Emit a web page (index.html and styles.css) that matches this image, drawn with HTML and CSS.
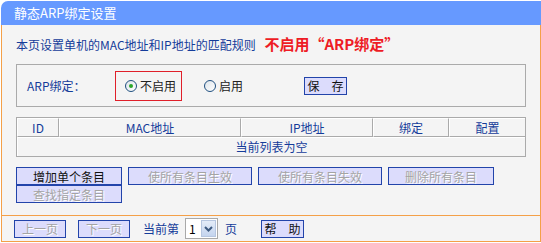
FILE: index.html
```html
<!DOCTYPE html>
<html lang="zh-CN">

<head>
  <meta charset="UTF-8">
  <title>静态ARP绑定设置</title>
  <link rel="stylesheet" href="styles.css">
</head>

<body>
  <div class="panel">
    <div class="title">静态ARP绑定设置</div>

    <div class="main">
      <div class="intro">
        本页设置单机的MAC地址和IP地址的匹配规则
        <span class="note">不启用“ARP绑定”</span>
      </div>

      <div class="bind-box">
        <span class="bind-label">ARP绑定：</span>
        <label class="opt opt-marked"><span class="radio checked"></span>不启用</label>
        <label class="opt opt-on"><span class="radio"></span>启用</label>
        <button class="btn btn-save" type="button">保　存</button>
      </div>

      <table class="list">
        <tr>
          <th class="c-id">ID</th>
          <th class="c-mac">MAC地址</th>
          <th class="c-ip">IP地址</th>
          <th class="c-bind">绑定</th>
          <th class="c-cfg">配置</th>
        </tr>
        <tr>
          <td colspan="5">当前列表为空</td>
        </tr>
      </table>

      <div class="actions">
        <button class="btn btn-short" type="button">增加单个条目</button>
        <button class="btn btn-long off" type="button">使所有条目生效</button>
        <button class="btn btn-long off" type="button">使所有条目失效</button>
        <button class="btn btn-short off" type="button">删除所有条目</button>
        <button class="btn btn-short off" type="button">查找指定条目</button>
      </div>
    </div>

    <div class="pager">
      <button class="btn btn-page off" type="button">上一页</button>
      <button class="btn btn-page off" type="button">下一页</button>
      <span class="page-text">当前第</span>
      <div class="select">
        <span class="select-value">1</span>
        <span class="select-arrow">
          <svg width="13" height="15" viewBox="0 0 13 15">
            <path d="M3 6 L6.5 9.5 L10 6" fill="none" stroke="#3d5a80" stroke-width="2"/>
          </svg>
        </span>
      </div>
      <span class="page-text page-unit">页</span>
      <button class="btn btn-help" type="button">帮　助</button>
    </div>
  </div>
</body>

</html>
```

FILE: styles.css
```css
body {
  margin: 0;
  background: #fff;
  font-family: "Noto Sans CJK SC", "Liberation Sans", sans-serif;
  font-size: 12px;
  color: #143c9a;
}

.panel {
  width: 541px;
  height: 243px;
}

.title {
  height: 24px;
  margin: 1px 0 0 1px;
  padding-left: 13px;
  line-height: 23px;
  font-size: 13px;
  color: #fff;
  background: #6699ff;
  border-top-left-radius: 7px;
}

.main {
  height: 190px;
  margin-left: 1px;
  width: 538px;
  background: #f4f4f4;
  border-left: 1px solid #f4a048;
  border-right: 1px solid #f4a048;
  border-bottom: 1px solid #f4a048;
}

.intro {
  padding: 11px 0 0 14px;
  height: 16px;
  line-height: 16px;
  white-space: nowrap;
}

.note {
  margin-left: 6px;
  font-size: 15px;
  font-weight: bold;
  color: #ee1c25;
}

.bind-box {
  display: flex;
  align-items: center;
  margin: 12px 0 0 14px;
  width: 508px;
  height: 41px;
  border: 1px solid #aaa;
}

.bind-label {
  width: 98px;
  padding-left: 10px;
  box-sizing: border-box;
  flex: none;
}

.opt {
  display: flex;
  align-items: center;
  gap: 3px;
  color: #222;
  box-sizing: border-box;
  flex: none;
}

.opt-marked {
  width: 67px;
  height: 30px;
  padding-left: 9px;
  border: 1px solid #e0202a;
}

.opt-on {
  width: 122px;
  padding-left: 22px;
}

.radio {
  width: 10px;
  height: 10px;
  border: 1px solid #1f4f80;
  border-radius: 50%;
  background: linear-gradient(135deg, #dde4ea, #fff);
  position: relative;
}

.radio.checked::after {
  content: "";
  position: absolute;
  left: 3px;
  top: 3px;
  width: 4px;
  height: 4px;
  border-radius: 50%;
  background: #2aa52a;
}

.btn {
  height: 18px;
  padding: 0;
  margin: 0;
  box-sizing: border-box;
  border: 1px solid #2244aa;
  background: #dcdcfc;
  font-family: "Noto Sans CJK SC", "Liberation Sans", sans-serif;
  font-size: 12px;
  line-height: 15px;
  color: #111;
}

.btn.off {
  color: #a4a4a4;
  text-shadow: 1px 1px 0 #fff;
}

.btn-save {
  width: 43px;
}

.list {
  margin: 10px 0 0 14px;
  width: 510px;
  border-collapse: separate;
  border-spacing: 0;
  border: 1px solid #aaa;
}

.list th,
.list td {
  padding: 0;
  font-weight: normal;
  text-align: center;
  border-right: 1px solid #aaa;
  border-bottom: 1px solid #aaa;
  border-left: 1px solid #fff;
  border-top: 1px solid #fff;
}

.list th {
  height: 17px;
  line-height: 17px;
}

.list td {
  height: 18px;
  line-height: 18px;
  border-bottom: none;
  border-right: none;
}

.list .c-cfg {
  border-right: none;
}

.c-id { width: 40px; }
.c-mac { width: 180px; }
.c-ip { width: 130px; }
.c-bind { width: 74px; }

.actions {
  display: flex;
  flex-wrap: wrap;
  column-gap: 6px;
  margin: 10px 0 0 14px;
  width: 490px;
}

.btn-short {
  width: 106px;
}

.btn-long {
  width: 124px;
}

.pager {
  display: flex;
  align-items: center;
  margin-left: 1px;
  width: 538px;
  height: 25px;
  background: #f4f4f4;
  border-left: 1px solid #f4a048;
  border-right: 1px solid #f4a048;
  border-bottom: 1px solid #f4a048;
}

.btn-page {
  width: 52px;
  margin-left: 12px;
}

.page-text {
  margin-left: 13px;
}

.select {
  display: flex;
  margin-left: 6px;
  width: 33px;
  height: 21px;
  box-sizing: border-box;
  border: 1px solid #a9a9a9;
  background: #fff;
}

.select-value {
  flex: 1;
  padding-left: 3px;
  line-height: 19px;
  color: #000;
}

.select-arrow {
  display: flex;
  align-items: center;
  justify-content: center;
  width: 15px;
  margin: 1px;
  box-sizing: border-box;
  border: 1px solid #b6c6e0;
  background: linear-gradient(#e4ecf8, #c4d4ee);
}

.page-unit {
  margin-left: 7px;
}

.btn-help {
  width: 43px;
  margin-left: 24px;
}
```
